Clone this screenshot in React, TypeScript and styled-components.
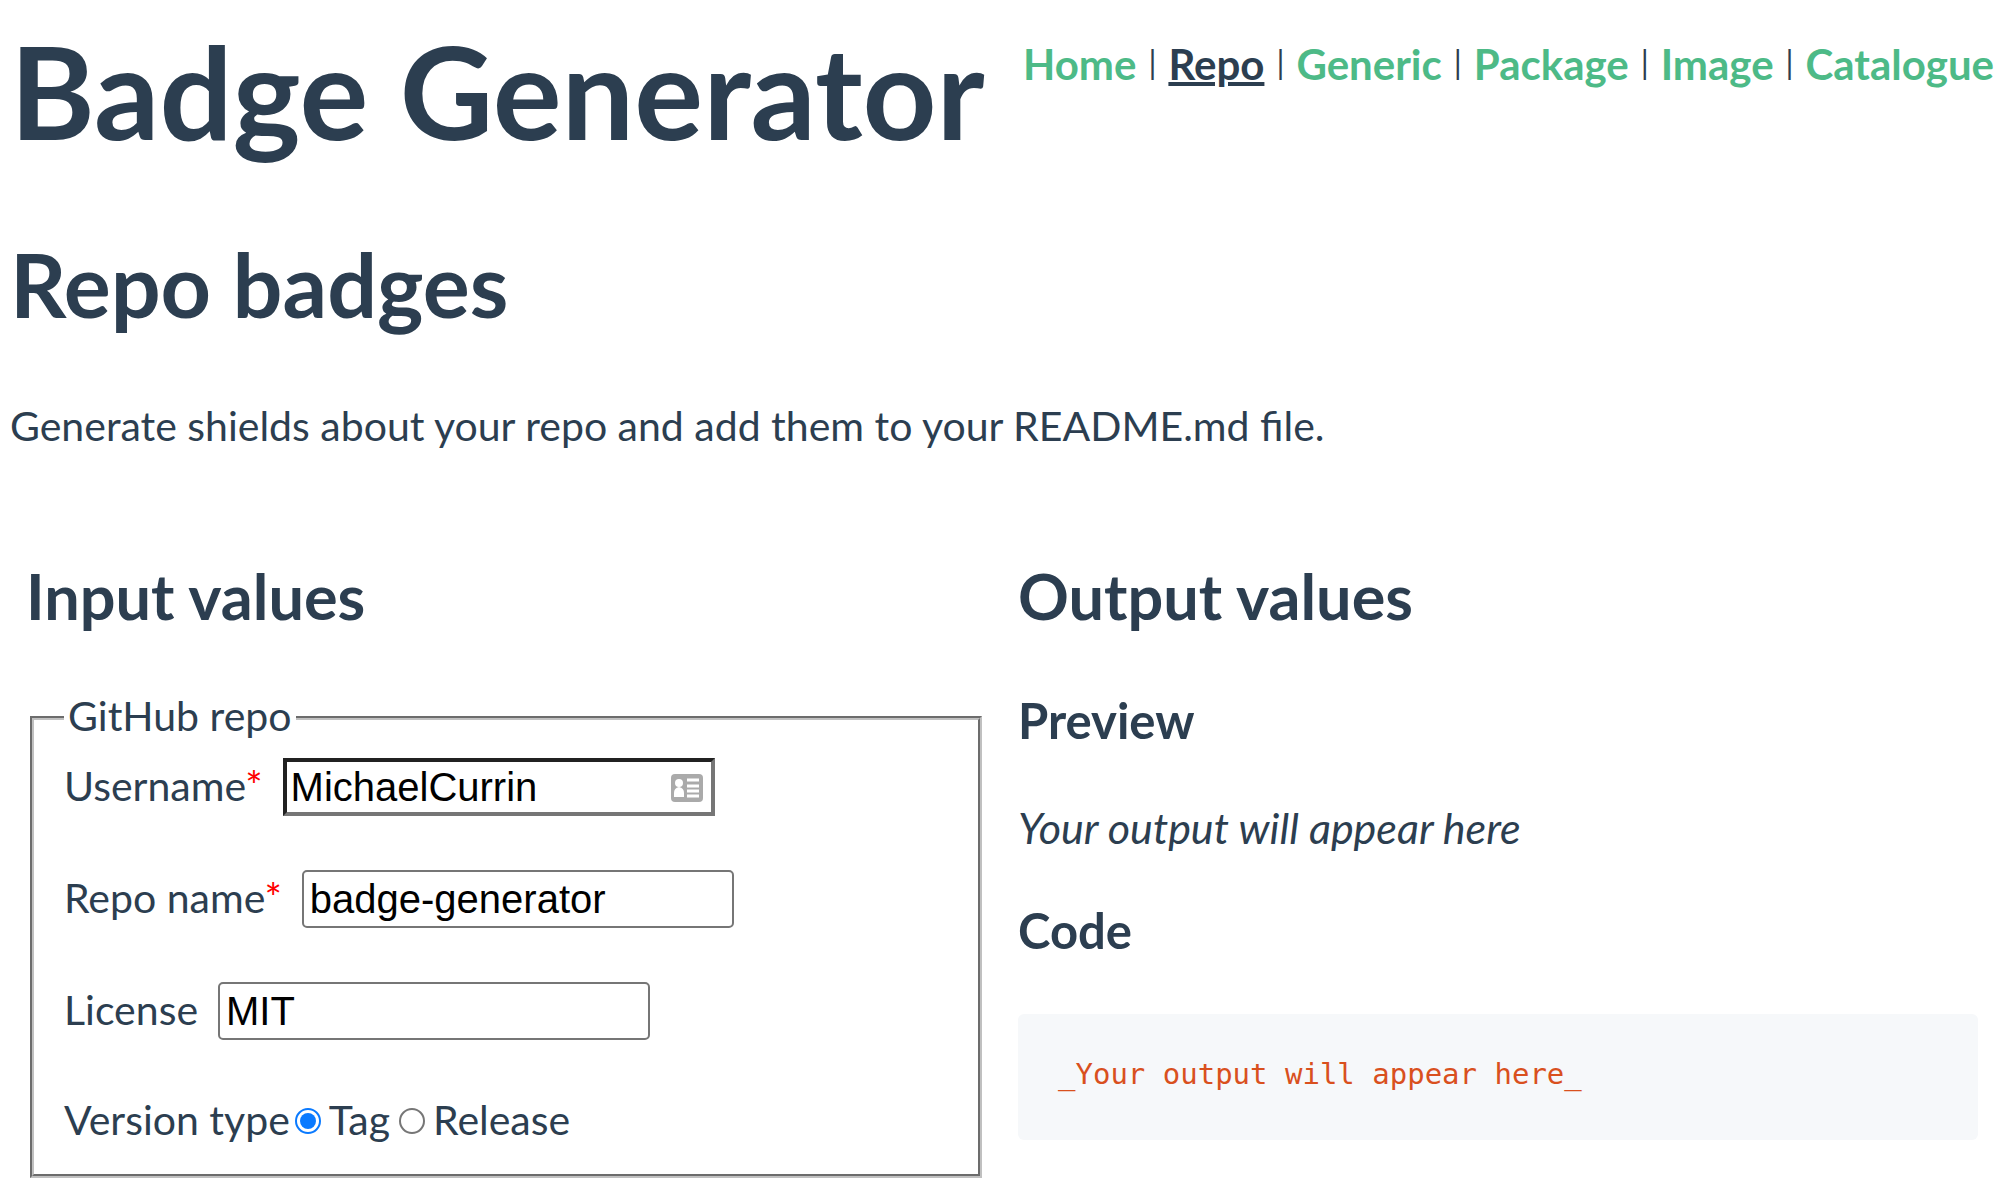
import React, { useState } from 'react';
import styled, { createGlobalStyle } from 'styled-components';

const ink = '#2c3e50';
const accent = '#4dba87';

const GlobalStyle = createGlobalStyle`
  *, *::before, *::after {
    box-sizing: border-box;
  }

  body {
    margin: 0;
    background: #ffffff;
    color: ${ink};
    font-family: Avenir, Lato, sans-serif;
    font-size: 41px;
    line-height: 48px;
    -webkit-font-smoothing: antialiased;
  }
`;

const Page = styled.div`
  padding: 18px 14px 24px 10px;
`;

const Header = styled.header`
  display: flex;
  justify-content: space-between;
  align-items: flex-start;
`;

const SiteTitle = styled.h1`
  margin: 0;
  font-size: 129px;
  line-height: 144px;
  font-weight: 700;
  white-space: nowrap;
`;

const Nav = styled.nav`
  display: flex;
  gap: 12px;
  padding-top: 22px;
  font-size: 42px;
  white-space: nowrap;
`;

const NavLink = styled.a<{ $active?: boolean }>`
  color: ${(p) => (p.$active ? ink : accent)};
  font-weight: 700;
  text-decoration: ${(p) => (p.$active ? 'underline 4px' : 'none')};
`;

const Separator = styled.span`
  display: flex;
  justify-content: center;
  width: 8px;
  font-size: 32px;
  line-height: 44px;
`;

const PageTitle = styled.h2`
  margin: 74px 0 70px;
  font-size: 88px;
  line-height: 96px;
  font-weight: 700;
`;

const Intro = styled.p`
  margin: 0;
`;

const Columns = styled.div`
  display: grid;
  grid-template-columns: 1fr 1fr;
  gap: 32px;
  margin-top: 110px;
  padding: 0 16px;
`;

const SectionTitle = styled.h3`
  margin: 0 0 60px;
  font-size: 63px;
  line-height: 72px;
  font-weight: 700;
`;

const SubTitle = styled.h4`
  margin: 0;
  font-size: 49px;
  line-height: 56px;
  font-weight: 700;
`;

const Group = styled.fieldset`
  margin: 0 4px;
  padding: 14px 30px 30px;
  border: 4px groove #c0c0c0;
`;

const Legend = styled.legend`
  padding: 0 4px 4px;
`;

const Rows = styled.div`
  display: flex;
  flex-direction: column;
  gap: 54px;
`;

const Row = styled.div`
  display: flex;
  align-items: center;
  gap: 20px;
`;

const FieldLabel = styled.label`
  padding-bottom: 2px;
`;

const RadioRow = styled.div`
  display: flex;
  align-items: center;
  padding-top: 2px;
`;

const RadioLabel = styled.label`
  margin-right: 4px;
`;

const Required = styled.span`
  color: #ff0000;
`;

const InputWrap = styled.div`
  position: relative;
  width: 432px;
`;

const TextInput = styled.input<{ $required?: boolean }>`
  display: block;
  width: 100%;
  height: 58px;
  padding: ${(p) => (p.$required ? '0 4px' : '0 6px')};
  border: ${(p) => (p.$required ? '4px inset #767676' : '2px solid #767676')};
  border-radius: ${(p) => (p.$required ? '0' : '5px')};
  background: #ffffff;
  color: #000000;
  font-family: Arial, 'Liberation Sans', sans-serif;
  font-size: 40px;
  outline: none;
`;

const ContactIcon = styled.svg`
  position: absolute;
  top: 16px;
  right: 12px;
  width: 32px;
  height: 28px;
`;

const Radio = styled.input`
  appearance: none;
  display: grid;
  place-items: center;
  width: 26px;
  height: 26px;
  margin: 2px 8px 0 5px;
  border: 2px solid #767676;
  border-radius: 50%;
  background: #ffffff;

  &:checked {
    border-color: #0a7aff;
  }

  &:checked::before {
    content: '';
    width: 16px;
    height: 16px;
    border-radius: 50%;
    background: #0a7aff;
  }
`;

const Preview = styled.p`
  margin: 56px 0 50px;
  font-size: 43px;
  font-style: italic;
`;

const CodeBlock = styled.pre`
  margin: 56px 0 0;
  padding: 40px 40px 46px;
  border-radius: 6px;
  background: #f6f8fa;
  color: #d9501e;
  font-family: 'DejaVu Sans Mono', monospace;
  font-size: 29px;
  line-height: 40px;

  code {
    font: inherit;
  }
`;

const pages = ['Home', 'Repo', 'Generic', 'Package', 'Image', 'Catalogue'];
const versions = ['Tag', 'Release'];

export default function App() {
  const [username, setUsername] = useState('MichaelCurrin');
  const [repo, setRepo] = useState('badge-generator');
  const [license, setLicense] = useState('MIT');
  const [version, setVersion] = useState('Tag');

  return (
    <Page>
      <GlobalStyle />
      <Header>
        <SiteTitle>Badge Generator</SiteTitle>
        <Nav>
          {pages.map((name, i) => (
            <React.Fragment key={name}>
              {i > 0 && <Separator>|</Separator>}
              <NavLink href={`#${name.toLowerCase()}`} $active={name === 'Repo'}>
                {name}
              </NavLink>
            </React.Fragment>
          ))}
        </Nav>
      </Header>

      <main>
        <PageTitle>Repo badges</PageTitle>
        <Intro>Generate shields about your repo and add them to your README.md file.</Intro>

        <Columns>
          <section>
            <SectionTitle>Input values</SectionTitle>
            <Group>
              <Legend>GitHub repo</Legend>
              <Rows>
                <Row>
                  <FieldLabel htmlFor="username">
                    Username<Required>*</Required>
                  </FieldLabel>
                  <InputWrap>
                    <TextInput
                      id="username"
                      type="text"
                      $required
                      value={username}
                      onChange={(e) => setUsername(e.target.value)}
                    />
                    <ContactIcon viewBox="0 0 32 28" aria-hidden="true">
                      <rect width="32" height="28" rx="4" fill="#aaaaaa" />
                      <circle cx="8" cy="9" r="4" fill="#ffffff" />
                      <path d="M3 23v-4q0-5 5-6q5 1 5 6v4z" fill="#ffffff" />
                      <path d="M16 6h12M16 12h12M16 17h12M16 22h12" stroke="#ffffff" strokeWidth="3" />
                    </ContactIcon>
                  </InputWrap>
                </Row>
                <Row>
                  <FieldLabel htmlFor="repo">
                    Repo name<Required>*</Required>
                  </FieldLabel>
                  <InputWrap>
                    <TextInput id="repo" type="text" value={repo} onChange={(e) => setRepo(e.target.value)} />
                  </InputWrap>
                </Row>
                <Row>
                  <FieldLabel htmlFor="license">License</FieldLabel>
                  <InputWrap>
                    <TextInput
                      id="license"
                      type="text"
                      value={license}
                      onChange={(e) => setLicense(e.target.value)}
                    />
                  </InputWrap>
                </Row>
                <RadioRow role="radiogroup" aria-labelledby="version-type">
                  <span id="version-type">Version type</span>
                  {versions.map((name) => (
                    <React.Fragment key={name}>
                      <Radio
                        type="radio"
                        id={`version-${name}`}
                        name="version"
                        checked={version === name}
                        onChange={() => setVersion(name)}
                      />
                      <RadioLabel htmlFor={`version-${name}`}>{name}</RadioLabel>
                    </React.Fragment>
                  ))}
                </RadioRow>
              </Rows>
            </Group>
          </section>

          <section>
            <SectionTitle>Output values</SectionTitle>
            <SubTitle>Preview</SubTitle>
            <Preview>Your output will appear here</Preview>
            <SubTitle>Code</SubTitle>
            <CodeBlock>
              <code>_Your output will appear here_</code>
            </CodeBlock>
          </section>
        </Columns>
      </main>
    </Page>
  );
}
